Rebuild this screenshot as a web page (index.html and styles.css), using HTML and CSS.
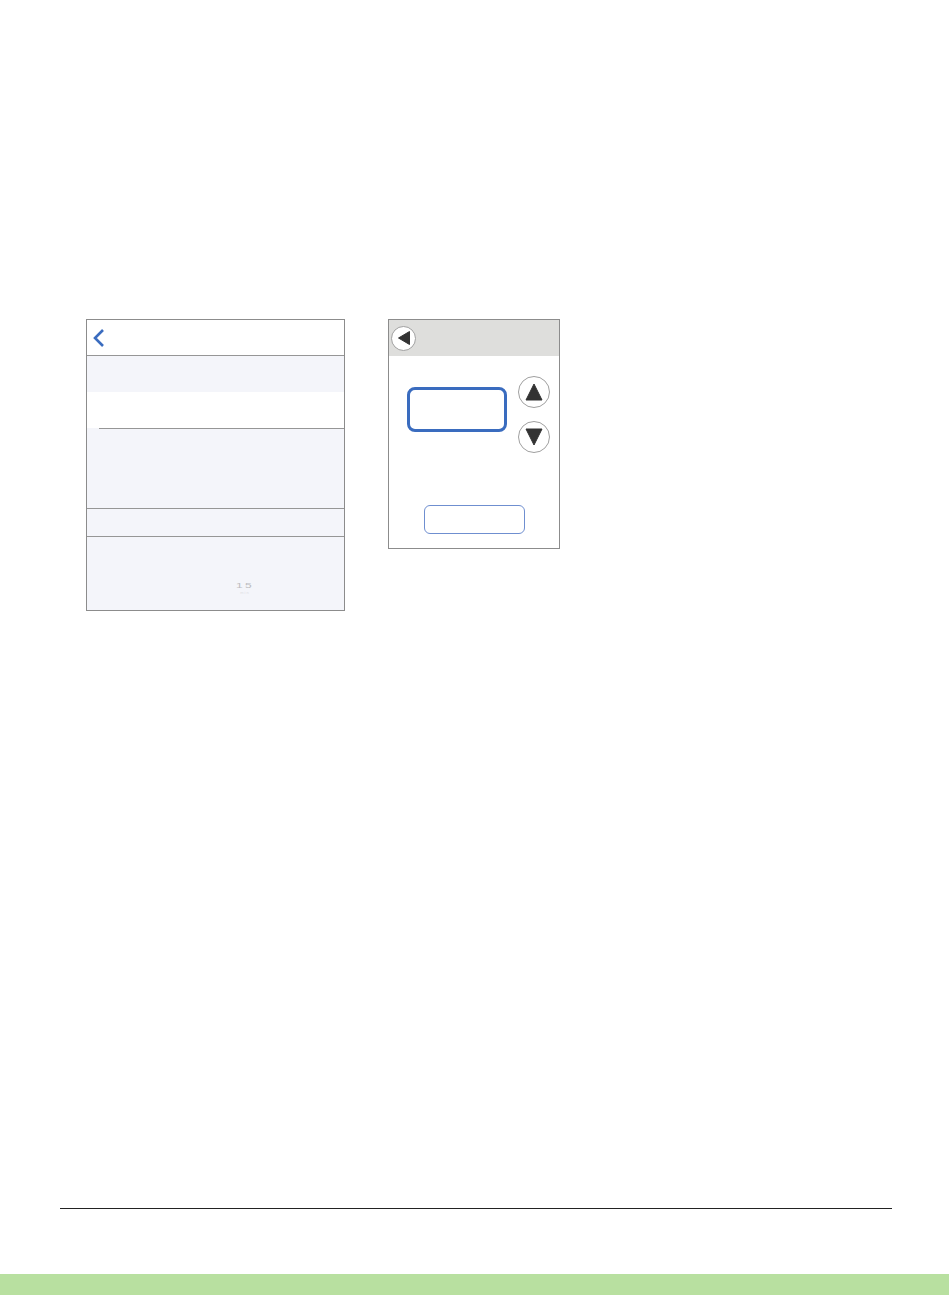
FILE: index.html
```html
<!DOCTYPE html>
<html lang="en">
<head>
    <meta charset="UTF-8">
    <meta name="viewport" content="width=device-width, initial-scale=1.0">
    <title>Screens</title>
    <link rel="stylesheet" href="styles.css">
</head>
<body>

<div class="screens">
    <!-- phone settings screen -->
    <div class="phone">
        <div class="phone-header">
            <svg class="chevron" width="12" height="18" viewBox="0 0 12 18">
                <path d="M10 1 L2 9 L10 17" fill="none" stroke="#3a6cbf" stroke-width="2.6"/>
            </svg>
        </div>
        <div class="row-grey"></div>
        <div class="row-white"></div>
        <div class="separator"></div>
        <div class="block-tall"></div>
        <div class="block-short"></div>
        <div class="block-picker">
            <span class="picker-value">15</span>
            <span class="picker-unit">min</span>
        </div>
    </div>

    <!-- device screen -->
    <div class="device">
        <div class="device-header">
            <div class="round-btn round-small">
                <svg width="14" height="16" viewBox="0 0 14 16"><path d="M1.5 8 L12.5 1.5 L12.5 14.5 Z" fill="#333" stroke="#333" stroke-linejoin="round"/></svg>
            </div>
        </div>
        <div class="device-controls">
            <div class="display"></div>
            <div class="arrows">
                <div class="round-btn">
                    <svg width="18" height="18" viewBox="0 0 18 18"><path d="M9 1 L17 17 L1 17 Z" fill="#333" stroke="#333" stroke-linejoin="round"/></svg>
                </div>
                <div class="round-btn">
                    <svg width="18" height="18" viewBox="0 0 18 18"><path d="M1 1 L17 1 L9 17 Z" fill="#333" stroke="#333" stroke-linejoin="round"/></svg>
                </div>
            </div>
        </div>
        <div class="confirm"></div>
    </div>
</div>

<div class="footer-line"></div>
<div class="footer-bar"></div>

</body>
</html>
```

FILE: styles.css
```css
* {
    box-sizing: border-box;
}
body {
    font-family: 'Liberation Sans', sans-serif;
    background-color: #ffffff;
    margin: 0;
    height: 1295px;
    display: flex;
    flex-direction: column;
}
.screens {
    display: flex;
    align-items: flex-start;
    gap: 43px;
    padding: 319px 0 0 86px;
}
.phone {
    width: 259px;
    height: 292px;
    border: 1px solid #8c8c8c;
    background-color: #f4f5fa;
    display: flex;
    flex-direction: column;
}
.phone-header {
    height: 36px;
    background-color: #ffffff;
    border-bottom: 1px solid #969696;
    padding: 1px 0 0 6px;
    display: flex;
    align-items: center;
}
.row-grey {
    height: 36px;
}
.row-white {
    height: 36px;
    background-color: #ffffff;
}
.separator {
    height: 1px;
    margin-left: 12px;
    background-color: #969696;
}
.block-tall {
    height: 80px;
    border-bottom: 1px solid #969696;
}
.block-short {
    height: 28px;
    border-bottom: 1px solid #969696;
}
.block-picker {
    flex: 1;
    display: flex;
    flex-direction: column;
    align-items: center;
    padding: 44px 0 0 59px;
}
.picker-value {
    font-size: 8px;
    line-height: 9px;
    letter-spacing: 1.5px;
    transform: scaleX(1.5);
    color: #bcbcc0;
}
.picker-unit {
    font-size: 4px;
    line-height: 6px;
    letter-spacing: 1px;
    color: #e0e0e4;
}
.device {
    width: 172px;
    height: 230px;
    border: 1px solid #8c8c8c;
    background-color: #ffffff;
    display: flex;
    flex-direction: column;
}
.device-header {
    height: 36px;
    background-color: #dededc;
    padding-left: 2px;
    display: flex;
    align-items: center;
}
.round-btn {
    width: 32px;
    height: 32px;
    border: 1px solid #a0a0a0;
    border-radius: 50%;
    background-color: #ffffff;
    display: flex;
    align-items: center;
    justify-content: center;
}
.round-small {
    width: 25px;
    height: 25px;
}
.device-controls {
    display: flex;
    align-items: flex-start;
    gap: 11px;
    padding: 20px 0 0 18px;
}
.display {
    width: 100px;
    height: 45px;
    margin-top: 11px;
    border: 3px solid #3a6cbf;
    border-radius: 8px;
}
.arrows {
    display: flex;
    flex-direction: column;
    gap: 13px;
}
.confirm {
    width: 101px;
    height: 29px;
    margin: 52px 0 0 35px;
    border: 1px solid #6f8fd0;
    border-radius: 6px;
}
.footer-line {
    height: 1px;
    margin: auto 58px 65px 60px;
    background-color: #222222;
}
.footer-bar {
    height: 21px;
    margin-right: 1px;
    background-color: #b8e0a0;
}
```
